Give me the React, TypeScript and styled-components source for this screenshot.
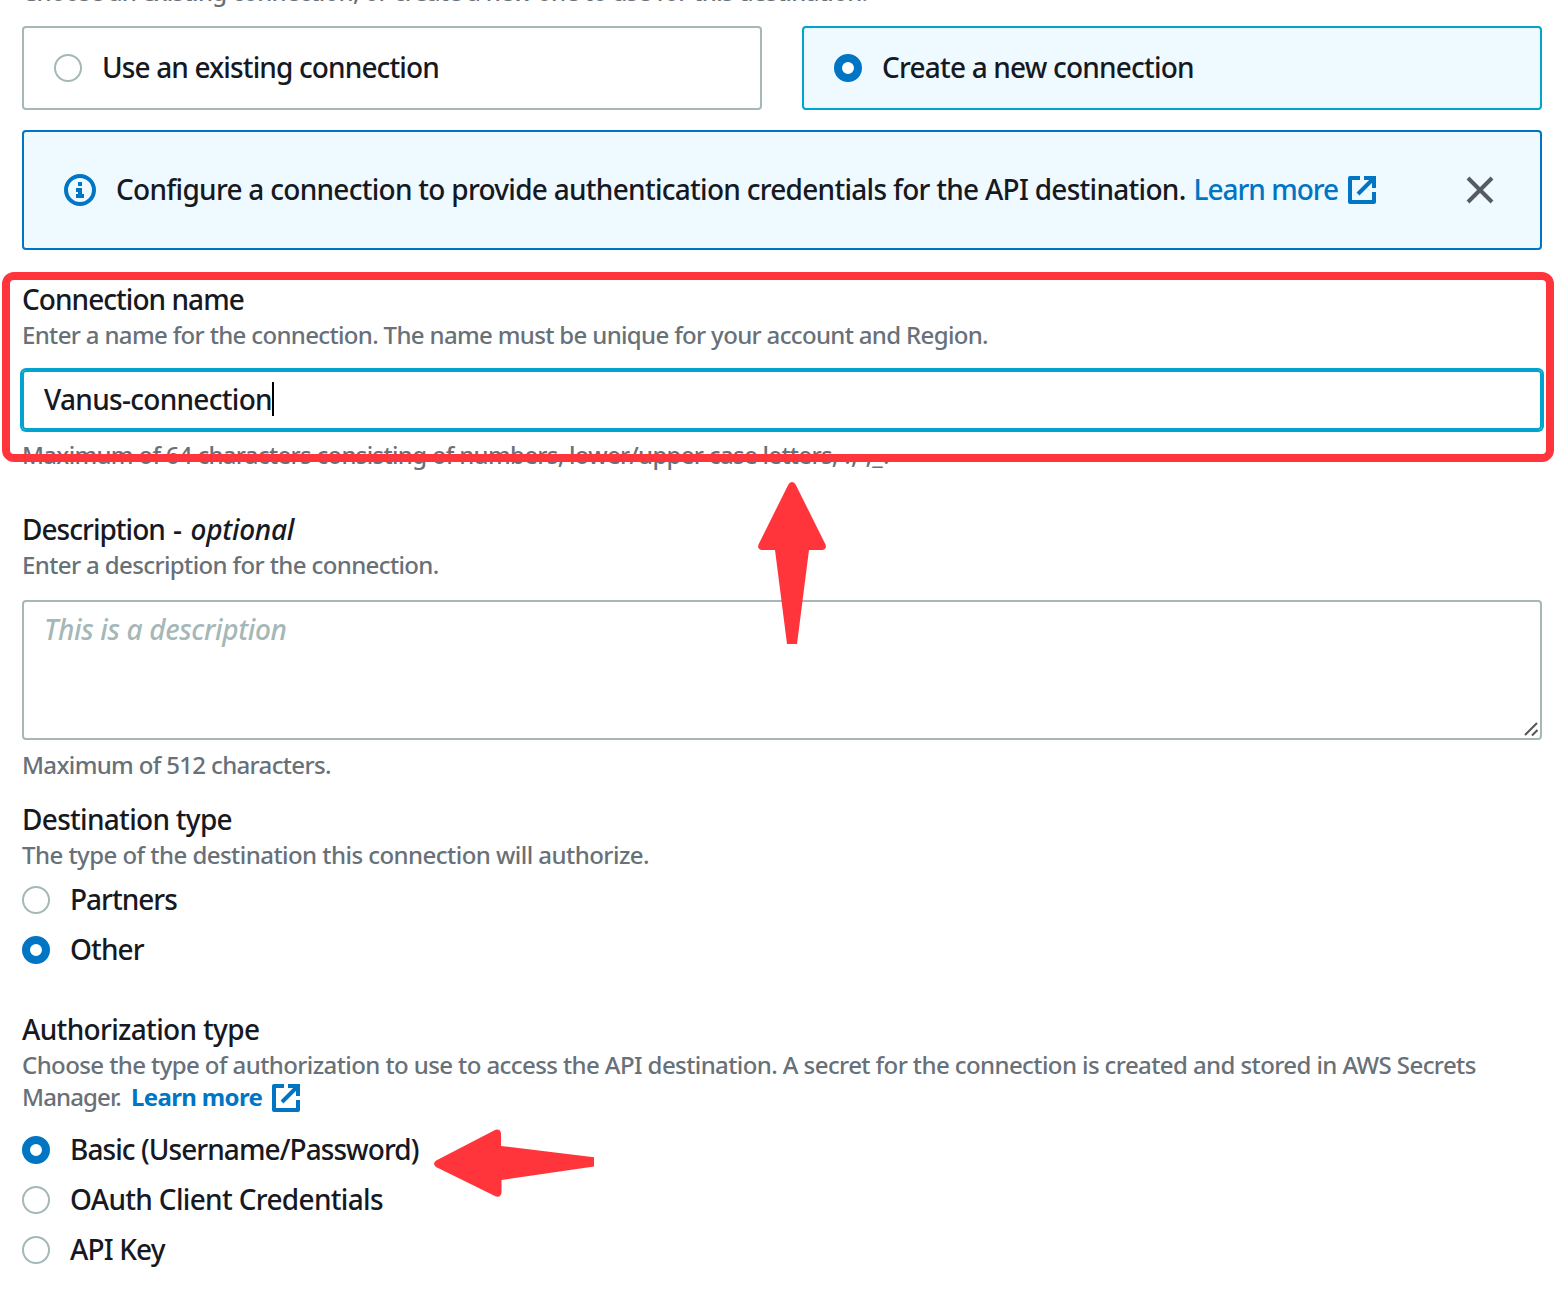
import React from "react";
import styled, { createGlobalStyle, css } from "styled-components";

const ink = "#16191f";
const muted = "#687078";
const blue = "#0075c4";
const cyan = "#00a4cf";
const line = "#a6b7b7";
const paleBlue = "#eefaff";
const marker = "#ff353b";

const GlobalStyle = createGlobalStyle`
  * { box-sizing: border-box; }
  html, body { margin: 0; background: #fff; }
  body {
    font-family: "Noto Sans", "Open Sans", sans-serif;
    font-weight: 500;
    color: ${ink};
  }
`;

const Page = styled.main`
  position: relative;
  width: 1564px;
  height: 1294px;
  overflow: hidden;
  background: #fff;
`;

const Form = styled.form`
  display: flex;
  flex-direction: column;
  margin-top: -23px;
  padding: 0 22px;
`;

const Text = styled.span<{ $track?: number }>`
  white-space: pre;
  letter-spacing: ${(p) => p.$track ?? 0}px;
`;

const Label = styled.div`
  margin: -1px 0 1px;
  font-size: 28px;
  line-height: 40px;
  height: 40px;
`;

const Hint = styled.div`
  margin: -1px 0 1px;
  font-size: 24px;
  line-height: 32px;
  color: ${muted};
`;

const HintLine = styled.div`
  display: flex;
  align-items: center;
  height: 32px;
`;

const Tiles = styled.div`
  display: grid;
  grid-template-columns: 1fr 1fr;
  gap: 40px;
  margin: 17px 0 20px;
`;

const Tile = styled.label<{ $on?: boolean }>`
  display: flex;
  align-items: center;
  gap: 20px;
  height: 84px;
  padding: 0 30px;
  border: 2px solid ${(p) => (p.$on ? cyan : line)};
  border-radius: 4px;
  background: ${(p) => (p.$on ? paleBlue : "#fff")};
  font-size: 28px;
`;

const Dot = styled.span<{ $on?: boolean }>`
  flex: none;
  width: 28px;
  height: 28px;
  border-radius: 50%;
  background: #fff;
  border: 2px solid ${line};
  ${(p) =>
    p.$on &&
    css`
      border: 8px solid ${blue};
    `}
`;

const Caption = styled(Text)`
  margin-bottom: 2px;
`;

const Alert = styled.div`
  display: flex;
  align-items: center;
  height: 120px;
  padding: 0 44px 0 40px;
  border: 2px solid ${blue};
  border-radius: 4px;
  background: ${paleBlue};
  font-size: 28px;
`;

const AlertBody = styled.div`
  display: flex;
  align-items: center;
  flex: 1;
  margin-left: 20px;
`;

const Link = styled.a<{ $bold?: boolean; $gap: number }>`
  display: inline-flex;
  align-items: center;
  gap: 10px;
  margin-left: ${(p) => p.$gap}px;
  color: ${blue};
  font-weight: ${(p) => (p.$bold ? 700 : 500)};
`;

const Icon = styled.svg`
  display: block;
  flex: none;
`;

const LowerIcon = styled.span`
  padding-top: 2px;
`;

const Field = styled.section<{ $top: number }>`
  display: flex;
  flex-direction: column;
  margin-top: ${(p) => p.$top}px;
`;

const Input = styled.div`
  display: flex;
  align-items: center;
  height: 60px;
  margin: 18px 0 10px;
  padding: 0 20px;
  border: 2px solid ${cyan};
  border-radius: 4px;
  box-shadow: 0 0 0 2px ${cyan};
  font-size: 28px;
`;

const Caret = styled.span`
  width: 2px;
  height: 34px;
  margin-top: -2px;
  background: #000;
`;

const Area = styled.div`
  display: flex;
  justify-content: space-between;
  height: 140px;
  margin: 18px 0 10px;
  padding: 7px 2px 2px 20px;
  border: 2px solid ${line};
  border-radius: 4px;
  font-size: 28px;
  line-height: 40px;
  font-style: italic;
  color: ${line};
`;

const Grip = styled(Icon)`
  align-self: flex-end;
`;

const Options = styled.div<{ $top: number }>`
  display: flex;
  flex-direction: column;
  gap: 10px;
  margin-top: ${(p) => p.$top}px;
`;

const Option = styled.label`
  display: flex;
  align-items: center;
  gap: 20px;
  height: 40px;
  font-size: 28px;
`;

const Highlight = styled.div`
  position: absolute;
  left: 2px;
  top: 272px;
  width: 1552px;
  height: 190px;
  border: 8px solid ${marker};
  border-radius: 12px;
`;

const Arrow = styled.svg<{ $x: number; $y: number }>`
  position: absolute;
  left: ${(p) => p.$x}px;
  top: ${(p) => p.$y}px;
  fill: ${marker};
`;

const ExternalIcon = () => (
  <Icon width="28" height="28" viewBox="0 0 28 28" fill="none" stroke={blue} strokeWidth="4">
    <path d="M12 2H2V26H26V16" strokeLinejoin="round" />
    <path d="M16 2H26V12M25.5 2.500L10 18" />
  </Icon>
);

const InfoIcon = () => (
  <Icon width="32" height="32" viewBox="0 0 32 32">
    <circle cx="16" cy="16" r="14" fill="none" stroke={blue} strokeWidth="4" />
    <path d="M14 8h4v4h-4zM12 14h6v6h2v4h-8v-4h2v-2h-2z" fill={blue} />
  </Icon>
);

const CloseIcon = () => (
  <Icon width="32" height="32" viewBox="0 0 32 32" stroke="#545b64" strokeWidth="4">
    <path d="M4 4L28 28M28 4L4 28" />
  </Icon>
);

type Choice = { text: string; on?: boolean; track?: number };

const RadioList = ({ items, top }: { items: Choice[]; top: number }) => (
  <Options $top={top}>
    {items.map((item) => (
      <Option key={item.text}>
        <Dot $on={item.on} />
        <Caption $track={item.track}>{item.text}</Caption>
      </Option>
    ))}
  </Options>
);

export default function App() {
  return (
    <Page>
      <GlobalStyle />
      <Form>
        <Hint>
          <Text $track={-0.66}>Choose an existing connection, or create a new one to use for this destination.</Text>
        </Hint>
        <Tiles>
          <Tile>
            <Dot />
            <Caption $track={-0.87}>Use an existing connection</Caption>
          </Tile>
          <Tile $on>
            <Dot $on />
            <Caption $track={-0.8}>Create a new connection</Caption>
          </Tile>
        </Tiles>
        <Alert>
          <InfoIcon />
          <AlertBody>
            <Caption $track={-0.72}>
              Configure a connection to provide authentication credentials for the API destination.
            </Caption>
            <Link $gap={8}>
              <Caption $track={-1.02}>Learn more</Caption>
              <ExternalIcon />
            </Link>
          </AlertBody>
          <CloseIcon />
        </Alert>

        <Field $top={30}>
          <Label>
            <Text $track={-0.96}>Connection name</Text>
          </Label>
          <Hint>
            <Text $track={-0.66}>
              Enter a name for the connection. The name must be unique for your account and Region.
            </Text>
          </Hint>
          <Input>
            <Caption $track={-0.7}>Vanus-connection</Caption>
            <Caret />
          </Input>
          <Hint>
            <Text $track={-0.7}>Maximum of 64 characters consisting of numbers, lower/upper case letters,</Text>
            <Text $track={0.2}> .,-,_.</Text>
          </Hint>
        </Field>

        <Field $top={38}>
          <Label>
            <Text $track={-0.97}>Description</Text>
            <Text $track={0.7}> - </Text>
            <Text as="em" $track={-0.3}>
              optional
            </Text>
          </Label>
          <Hint>
            <Text $track={-0.62}>Enter a description for the connection.</Text>
          </Hint>
          <Area>
            <Text $track={-0.35}>This is a description</Text>
            <Grip width="14" height="14" viewBox="0 0 14 14" stroke="#555" strokeWidth="2">
              <path d="M1 13L13 1M8 13.500L13.500 8" />
            </Grip>
          </Area>
          <Hint>
            <Text $track={-0.66}>Maximum of 512 characters.</Text>
          </Hint>
        </Field>

        <Field $top={18}>
          <Label>
            <Text $track={-0.7}>Destination type</Text>
          </Label>
          <Hint>
            <Text $track={-0.54}>The type of the destination this connection will authorize.</Text>
          </Hint>
          <RadioList
            top={8}
            items={[
              { text: "Partners", track: -1 },
              { text: "Other", on: true, track: -0.9 },
            ]}
          />
        </Field>

        <Field $top={40}>
          <Label>
            <Text $track={-0.66}>Authorization type</Text>
          </Label>
          <Hint>
            <HintLine>
              <Text $track={-0.59}>
                Choose the type of authorization to use to access the API destination. A secret for the connection is
                created and stored in AWS Secrets
              </Text>
            </HintLine>
            <HintLine>
              <Text $track={-0.88}>Manager.</Text>
              <Link $bold $gap={10}>
                <Text $track={-0.65}>Learn more</Text>
                <LowerIcon>
                  <ExternalIcon />
                </LowerIcon>
              </Link>
            </HintLine>
          </Hint>
          <RadioList
            top={16}
            items={[
              { text: "Basic (Username/Password)", on: true, track: -0.93 },
              { text: "OAuth Client Credentials", track: -0.67 },
              { text: "API Key", track: -0.85 },
            ]}
          />
        </Field>
      </Form>

      <Highlight />
      <Arrow $x={758} $y={482} width="68" height="162" viewBox="0 0 68 162">
        <path d="M30.500 2.200Q34 -2 37.500 2.200L67.500 62.500Q69 67 64.500 68H51L39 162H29L17 68H3.500Q-1 67 0.500 62.500Z" />
      </Arrow>
      <Arrow $x={434} $y={1129} width="160" height="68" viewBox="0 0 160 68">
        <path d="M2.200 31.500L61.500 0.700Q66.500 -0.500 67 4.500L67 17L160 28.300V37.500L67.500 51V63.500Q67 68.500 62 67.500L2 38Q-2 34.500 2.200 31.500Z" />
      </Arrow>
    </Page>
  );
}
